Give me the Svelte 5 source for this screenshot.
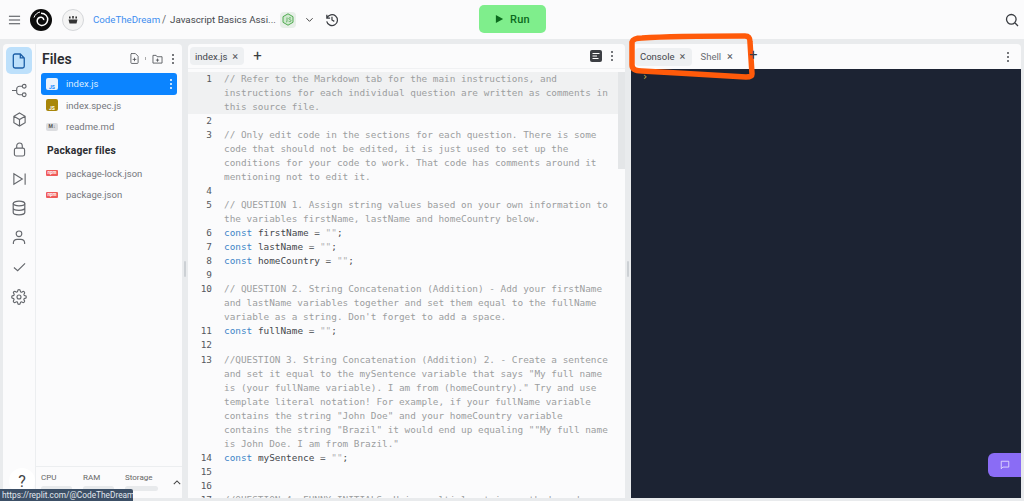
<script>
  const code = [
    { n: 1, hl: true, c: ['// Refer to the Markdown tab for the main instructions, and', 'instructions for each individual question are written as comments in', 'this source file.'] },
    { n: 2 },
    { n: 3, c: ['// Only edit code in the sections for each question. There is some', 'code that should not be edited, it is just used to set up the', 'conditions for your code to work. That code has comments around it', 'mentioning not to edit it.'] },
    { n: 4 },
    { n: 5, c: ['// QUESTION 1. Assign string values based on your own information to', 'the variables firstName, lastName and homeCountry below.'] },
    { n: 6, k: 'firstName' },
    { n: 7, k: 'lastName' },
    { n: 8, k: 'homeCountry' },
    { n: 9 },
    { n: 10, c: ['// QUESTION 2. String Concatenation (Addition) - Add your firstName', 'and lastName variables together and set them equal to the fullName', "variable as a string. Don't forget to add a space."] },
    { n: 11, k: 'fullName' },
    { n: 12 },
    { n: 13, c: ['//QUESTION 3. String Concatenation (Addition) 2. - Create a sentence', 'and set it equal to the mySentence variable that says "My full name', 'is (your fullName variable). I am from (homeCountry)." Try and use', 'template literal notation! For example, if your fullName variable', 'contains the string "John Doe" and your homeCountry variable', 'contains the string "Brazil" it would end up equaling ""My full name', 'is John Doe. I am from Brazil."'] },
    { n: 14, k: 'mySentence' },
    { n: 15 },
    { n: 16 },
    { n: 17, c: ['//QUESTION 4. FUNNY INITIALS. Using multiple string methods and your'] }
  ];
</script>

<div class="page">
  <header class="top">
    <svg class="burger" viewBox="0 0 14 10" width="13" height="10"><path d="M1 1h12M1 5h12M1 9h12" /></svg>
    <svg class="logo" viewBox="0 0 22 22" width="22" height="22">
      <circle cx="11" cy="11" r="11" fill="#0c0c0c" />
      <path d="M11 4.2c4.4 0 7.2 3.4 6.6 7.2-.5 3.2-3.4 5.4-6.4 5-2.6-.4-4.400-2.600-4-5 .3-2 2-3.400 4-3.200 1.600.2 2.700 1.500 2.500 3" fill="none" stroke="#fff" stroke-width="1.500" />
      <path d="M4 8.500C5 5.500 7.500 3.500 10 3" fill="none" stroke="#fff" stroke-width="1" />
    </svg>
    <div class="avatar">
      <svg viewBox="0 0 12 9" width="12" height="9"><path d="M1.500 4.500h9l-1 4h-7zM2 1.500h1.600v2H2zM5.200 1h1.600v2.400H5.200zM8.400 1.500H10v2H8.400z" fill="#333" /></svg>
    </div>
    <span class="owner">CodeTheDream</span>
    <span class="slash">/</span>
    <span class="repl">Javascript Basics Assi...</span>
    <div class="node">
      <svg viewBox="0 0 12 13" width="12" height="13"><path d="M6 .8l5 2.900v5.600l-5 2.900-5-2.900V3.700z" fill="#cfe8cf" stroke="#4faa4f" /><path d="M5 4.500v3.600q0 1-1 .9M9 5q-2-.9-2.200.5c0 1.300 2.200.8 2.200 2.100 0 1.300-1.600 1-2.400.6" fill="none" stroke="#4faa4f" stroke-width=".8" /></svg>
    </div>
    <svg class="chev" viewBox="0 0 10 6" width="9" height="6"><path d="M1.500 1l3.500 3.500L8.500 1" /></svg>
    <svg class="hist" viewBox="0 0 16 16" width="15" height="15"><path d="M3 3v3.500h3.500M3.200 6.500a5.800 5.800 0 1 1-.3 3.500M8.500 5v3.500l2.500 1.500" /></svg>
    <div class="run-wrap">
      <button class="run"><svg viewBox="0 0 10 10" width="9" height="10"><path d="M1 .5l8 4.500-8 4.500z" fill="#0b6a1d" /></svg>Run</button>
    </div>
    <svg class="search" viewBox="0 0 14 14" width="14" height="14"><circle cx="6.300" cy="6.300" r="4.800" /><path d="M10 10l3 3" /></svg>
  </header>

  <main class="main">
    <aside class="side">
      <nav class="rail">
        <div class="ri active"><svg viewBox="0 0 16 18" width="14" height="16"><path d="M3.500 1h6l4.500 4.500V15a2 2 0 0 1-2 2H3.500a2 2 0 0 1-2-2V3a2 2 0 0 1 2-2zM9.500 1v4.500H14" /></svg></div>
        <div class="ri"><svg viewBox="0 0 16 16" width="15" height="15"><circle cx="13" cy="3.500" r="2" /><circle cx="13" cy="12.500" r="2" /><path d="M0 8h5M11 3.500H8a3 3 0 0 0-3 3v3a3 3 0 0 0 3 3h3" /></svg></div>
        <div class="ri"><svg viewBox="0 0 16 16" width="15" height="15"><path d="M8 1l6 3.500v7L8 15l-6-3.500v-7zM2 4.500L8 8l6-3.500M8 8v7" /></svg></div>
        <div class="ri"><svg viewBox="0 0 14 16" width="13" height="15"><rect x="1.500" y="6.500" width="11" height="8.500" rx="2" /><path d="M4 6.500V4a3 3 0 0 1 6 0v2.500" /></svg></div>
        <div class="ri"><svg viewBox="0 0 16 14" width="15" height="14"><path d="M2 1.500l9 5.500-9 5.500zM14 1v12" /></svg></div>
        <div class="ri"><svg viewBox="0 0 14 16" width="14" height="16"><ellipse cx="7" cy="3.500" rx="5.800" ry="2.300" /><path d="M1.200 3.500v9c0 1.300 2.600 2.300 5.800 2.300s5.800-1 5.800-2.300v-9M1.200 8c0 1.300 2.600 2.300 5.800 2.300s5.800-1 5.800-2.300" /></svg></div>
        <div class="ri"><svg viewBox="0 0 14 16" width="14" height="15"><circle cx="7" cy="4" r="3" /><path d="M1 15v-1.500A4 4 0 0 1 5 10h4a4 4 0 0 1 4 3.500V15" /></svg></div>
        <div class="ri"><svg viewBox="0 0 14 10" width="13" height="10"><path d="M1 5.500L5 9l8-8" /></svg></div>
        <div class="ri"><svg viewBox="0 0 24 24" width="16" height="16" class="thick"><circle cx="12" cy="12" r="3" /><path d="M19.400 15a1.700 1.700 0 0 0 .3 1.800l.1.100a2 2 0 1 1-2.900 2.900l-.1-.1a1.700 1.700 0 0 0-2.800 1.200V21a2 2 0 1 1-4 0v-.1a1.700 1.700 0 0 0-2.900-1.200l-.1.100a2 2 0 1 1-2.900-2.900l.1-.1a1.700 1.700 0 0 0-1.200-2.800H3a2 2 0 1 1 0-4h.1a1.700 1.700 0 0 0 1.200-2.900l-.1-.1a2 2 0 1 1 2.900-2.900l.1.100a1.700 1.700 0 0 0 1.800.3H9a1.700 1.700 0 0 0 1-1.500V3a2 2 0 1 1 4 0v.1a1.700 1.700 0 0 0 2.900 1.200l.1-.1a2 2 0 1 1 2.900 2.900l-.1.100a1.700 1.700 0 0 0-.3 1.800V9a1.700 1.700 0 0 0 1.500 1H21a2 2 0 1 1 0 4h-.1a1.700 1.700 0 0 0-1.500 1z" /></svg></div>
        <div class="help">?</div>
      </nav>
      <div class="files">
        <div class="fhead">
          <span class="ftitle">Files</span>
          <svg viewBox="0 0 10 12" width="9" height="11"><path d="M1.500.5h4.500l3 3v7a1 1 0 0 1-1 1h-6a1 1 0 0 1-1-1v-9a1 1 0 0 1 1-1zM5 5v4M3 7h4" /></svg>
          <i class="tick"></i>
          <svg viewBox="0 0 12 11" width="11" height="10"><path d="M1 1.500h3.500l1 1.500H11v7H1zM6 5v3.500M4.200 6.700h3.600" /></svg>
          <span class="dots dark"><b></b><b></b><b></b></span>
        </div>
        <div class="frow sel">
          <span class="badge js white">JS</span><span class="fname">index.js</span>
          <span class="dots light"><b></b><b></b><b></b></span>
        </div>
        <div class="frow"><span class="badge js">JS</span><span class="fname">index.spec.js</span></div>
        <div class="frow"><span class="badge md">M↓</span><span class="fname">readme.md</span></div>
        <div class="pk">Packager files</div>
        <div class="frow"><span class="badge npm">npm</span><span class="fname">package-lock.json</span></div>
        <div class="frow"><span class="badge npm">npm</span><span class="fname">package.json</span></div>
        <div class="res">
          <div class="rcol"><span>CPU</span><i></i></div>
          <div class="rcol"><span>RAM</span><i></i></div>
          <div class="rcol wide"><span>Storage</span><i></i></div>
          <svg viewBox="0 0 10 6" width="8" height="5"><path d="M1 5l4-4 4 4" /></svg>
        </div>
      </div>
    </aside>

    <div class="grip"><i></i></div>

    <section class="editor">
      <div class="tabs">
        <div class="tab"><span>index.js</span><em>×</em></div>
        <span class="plus">+</span>
        <span class="spacer"></span>
        <svg class="fmt" viewBox="0 0 12 12" width="12" height="12"><rect width="12" height="12" rx="2" fill="#3c3f44" /><path d="M2.500 3.500h7M2.500 6h4.500M2.500 8.500h6" stroke="#fff" fill="none" /></svg>
        <span class="dots dark"><b></b><b></b><b></b></span>
      </div>
      <div class="body">
        <div class="code">
          {#each code as l}
            <div class="ln" class:hl={l.hl}>
              <span class="num">{l.n}</span>
              <div class="txt">
                {#if l.c}
                  {#each l.c as t}<div class="cm">{t}</div>{/each}
                {:else if l.k}
                  <div><span class="kw">const</span> {l.k} = <span class="st">""</span>;</div>
                {:else}
                  <div>&nbsp;</div>
                {/if}
              </div>
            </div>
          {/each}
        </div>
        <div class="scroll"><i></i></div>
      </div>
    </section>

    <div class="grip"><i></i></div>

    <section class="right">
      <div class="tabs rt">
        <div class="tab"><span>Console</span><em>×</em></div>
        <div class="tab off"><span>Shell</span><em>×</em></div>
        <span class="plus">+</span>
        <span class="spacer"></span>
        <span class="dots dark"><b></b><b></b><b></b></span>
      </div>
      <div class="term"><span class="prompt">›</span></div>
    </section>
  </main>

  <div class="chat"><svg viewBox="0 0 12 12" width="10" height="10"><path d="M1.500 1.500h9v7H3.500l-2 2z" /></svg></div>
  <div class="status">https://replit.com/@CodeTheDream</div>
  <svg class="mark" viewBox="0 0 1024 501" width="1024" height="501"><path d="M632 42c1-3 5-4 10-4 30-2 70-2 103-2 4 0 5 2 5 6l2 32c0 2-1 3-6 3-30-2-70-4-104-6-6 0-10-2-10-6z" /></svg>
  <span class="plus over">+</span>
</div>

<style>
  :global(body) { margin: 0; background: #e9ebed; }
  .page { position: relative; width: 1024px; height: 501px; overflow: hidden; background: #e9ebed; font-family: "Roboto", "Liberation Sans", sans-serif; color: #3a3d42; }

  .top { height: 39px; background: #fbfbfc; display: flex; align-items: center; padding-left: 8px; box-sizing: border-box; }
  .burger path { stroke: #4a4d52; stroke-width: 1.200; fill: none; }
  .logo { margin-left: 9px; }
  .avatar { width: 20px; height: 20px; margin-left: 10px; border-radius: 50%; border: 1px solid #d5d7da; background: #f4f4f4; display: flex; align-items: center; justify-content: center; }
  .owner { margin-left: 9px; width: 65px; white-space: nowrap; font-size: 9.700px; color: #3f8ef0; }
  .slash { margin-left: 4px; width: 4px; font-size: 10px; color: #666; }
  .repl { margin-left: 4px; font-size: 9.800px; color: #45484d; width: 104px; white-space: nowrap; }
  .node { width: 16px; height: 16px; margin-left: 6px; border-radius: 4px; background: #e7efe8; display: flex; align-items: center; justify-content: center; }
  .chev { margin-left: 9px; }
  .chev path { fill: none; stroke: #444; stroke-width: 1.100; }
  .hist { margin-left: 10px; }
  .hist path { fill: none; stroke: #3a3d42; stroke-width: 1.300; }
  .run-wrap { position: absolute; left: 479px; top: 5px; }
  .run { width: 67px; height: 28px; border: 0; border-radius: 5px; background: #7fee8c; color: #0b6a1d; font: 500 11px "Roboto", sans-serif; letter-spacing: .3px; display: flex; align-items: center; justify-content: center; gap: 6px; padding: 0; }
  .search { margin-left: auto; margin-right: 5px; }
  .search circle, .search path { fill: none; stroke: #3a3d42; stroke-width: 1.300; }

  .main { height: 462px; display: flex; padding: 5px 3px 3px 3px; box-sizing: border-box; }
  .side { width: 179px; display: flex; background: #fbfbfc; border-radius: 4px 4px 0 0; }
  .rail { position: relative; width: 33px; box-sizing: border-box; padding-top: 3px; border-right: 1px solid #eceef0; display: flex; flex-direction: column; align-items: center; }
  .ri { width: 26px; height: 27px; margin-bottom: 2.500px; display: flex; align-items: center; justify-content: center; border-radius: 5px; }
  .ri svg { fill: none; stroke: #64676c; stroke-width: 1.200; }
  .ri svg.thick { stroke-width: 1.700; }
  .ri.active { background: #bde0fb; }
  .ri.active svg { stroke: #1c5ea6; stroke-width: 1.500; }
  .help { position: absolute; left: 6px; bottom: 4px; width: 26px; height: 26px; border-radius: 50%; background: #fff; font-size: 16px; color: #444; display: flex; align-items: center; justify-content: center; }

  .files { flex: 1; display: flex; flex-direction: column; padding: 0 5px; position: relative; }
  .fhead { height: 29px; display: flex; align-items: center; gap: 6px; padding: 0 3px 0 1px; }
  .ftitle { font-size: 14px; font-weight: 600; color: #2b2d31; margin-right: auto; }
  .fhead svg { fill: none; stroke: #4a4d52; stroke-width: .9; }
  .tick { width: 1px; height: 3px; background: #aaa; }
  .frow { height: 21.500px; display: flex; align-items: center; padding-left: 5px; font-size: 9.500px; color: #74777c; border-radius: 3px; }
  .frow.sel { background: #0b84ff; color: #d8ecff; position: relative; }
  .fname { margin-left: 8px; }
  .badge { width: 12px; height: 11px; font-size: 5px; font-weight: 700; display: flex; align-items: flex-end; justify-content: center; border-radius: 2px; box-sizing: border-box; line-height: 1; flex: none; }
  .badge.js { background: #a8860a; color: #fff; height: 12px; }
  .badge.js.white { background: #e8f2fd; color: #0b84ff; }
  .badge.md { background: #dcdde0; color: #555; height: 8px; align-items: center; }
  .badge.npm { background: #ef5b5b; color: #fff; height: 6px; align-items: center; font-size: 4.500px; border-radius: 1px; }
  .pk { font-size: 10.300px; font-weight: 700; letter-spacing: .2px; color: #2b2d31; padding: 6px 0 5px 6px; height: 14px; line-height: 14px; }
  .dots { display: inline-flex; flex-direction: column; gap: 2px; margin-left: 3px; }
  .dots b { width: 2px; height: 2px; border-radius: 50%; background: #4a4d52; display: block; }
  .dots.light { position: absolute; right: 5px; top: 6px; }
  .dots.light b { background: #fff; }
  .res { position: absolute; left: 0; right: 0; bottom: 2px; height: 30px; border-top: 1px solid #eceef0; display: flex; padding-left: 5px; gap: 11px; font-size: 8px; color: #666; box-sizing: border-box; padding-top: 6px; }
  .rcol { width: 31px; display: flex; flex-direction: column; gap: 4px; }
  .rcol.wide { width: 33px; }
  .rcol i { height: 5px; border-radius: 3px; background: #e8eaec; display: block; }
  .res svg { margin: 7px 0 0 4px; fill: none; stroke: #444; stroke-width: 1.300; }

  .grip { width: 6px; flex: none; display: flex; align-items: center; justify-content: center; }
  .grip i { width: 2px; height: 16px; margin-top: -4px; background: #ccd0d4; border-radius: 1px; }

  .editor { flex: 1; min-width: 0; display: flex; flex-direction: column; background: #fbfbfc; border-radius: 4px 4px 0 0; }
  .tabs { height: 25px; flex: none; display: flex; align-items: center; padding: 0 2px; border-bottom: 1px solid #f0f1f3; box-sizing: border-box; }
  .tab { height: 18px; display: flex; align-items: center; gap: 5px; padding: 0 6px 0 5px; background: #eef0f2; border-radius: 4px; font-size: 9.500px; color: #43464b; }
  .tab em { font-style: normal; font-size: 11px; color: #55585d; width: 6px; }
  .tab.off { background: none; color: #6a6d72; margin-left: 4px; gap: 6px; }
  .plus { font-size: 15px; color: #3a3d42; margin-left: 9px; line-height: 1; }
  .spacer { flex: 1; }
  .fmt { margin-right: 9px; }
  .tabs .dots { margin: 0 10px 0 0; }

  .body { flex: 1; min-height: 0; display: flex; overflow: hidden; padding-top: 2.600px; }
  .code { flex: 1; min-width: 0; font-family: "DejaVu Sans Mono", monospace; font-size: 9.380px; line-height: 14.040px; color: #45484c; white-space: pre; overflow: hidden; }
  .ln { display: flex; }
  .ln.hl { background: #f0f1f2; }
  .num { width: 24px; text-align: right; flex: none; color: #55585d; font-weight: 400; }
  .txt { margin-left: 12px; }
  .cm { color: #9c9e9f; }
  .kw { color: #3f86c8; }
  .st { color: #aeb0b2; }
  .scroll { width: 7px; flex: none; }
  .scroll i { display: block; height: 97px; background: #e4e6e8; }

  .right { width: 390px; flex: none; display: flex; flex-direction: column; background: #fbfbfc; border-radius: 4px 4px 0 0; }
  .rt { padding-left: 4px; border-bottom: 0; }
  .rt .plus { visibility: hidden; }
  .plus.over { position: absolute; left: 749px; top: 48px; margin: 0; }
  .term { flex: 1; background: #1c2333; padding: 2px 0 0 11px; font-size: 10px; color: #c9b544; font-family: "DejaVu Sans Mono", monospace; }

  .chat { position: absolute; right: 3px; top: 453px; width: 33px; height: 24px; background: #8a6cf5; border-radius: 6px 0 0 6px; display: flex; align-items: center; justify-content: center; }
  .chat svg { fill: none; stroke: #e8e2ff; stroke-width: 1; }
  .status { position: absolute; left: 0; top: 489px; height: 12px; width: 133px; background: #3c4f66; color: #e3e8ee; font-size: 8.300px; line-height: 12px; padding-left: 2px; box-sizing: border-box; border-radius: 0 2px 0 0; white-space: nowrap; overflow: hidden; }
  .mark { position: absolute; left: 0; top: 0; pointer-events: none; }
  .mark path { fill: none; stroke: #ff5a0a; stroke-width: 5.500; stroke-linejoin: round; }
</style>
